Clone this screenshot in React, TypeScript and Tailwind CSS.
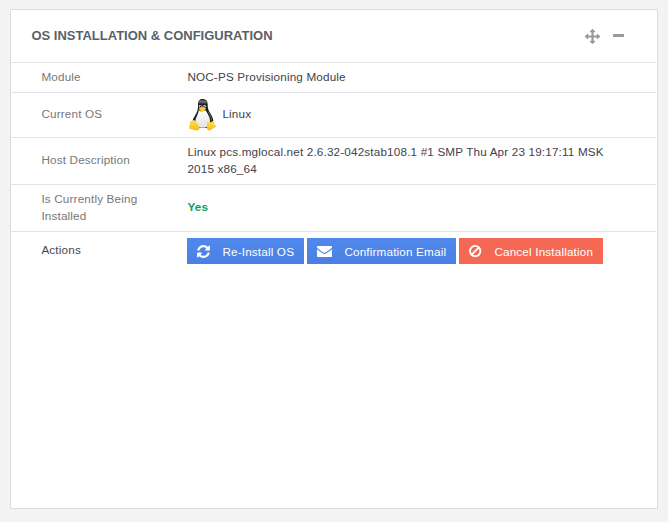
import React from 'react';

const RefreshIcon = () => (
  <svg className="h-[15px] w-[13px] shrink-0" viewBox="0 0 1536 1792" fill="currentColor">
    <path d="M1511 1056q0 5-1 7-64 268-268 434.5t-478 166.5q-146 0-282.5-55t-243.5-157l-129 129q-19 19-45 19t-45-19-19-45v-448q0-26 19-45t45-19h448q26 0 45 19t19 45-19 45l-137 137q71 66 161 102t187 36q134 0 250-65t186-179q11-17 53-117 8-23 30-23h192q13 0 22.5 9.5t9.5 22.5zm25-800v448q0 26-19 45t-45 19h-448q-26 0-45-19t-19-45 19-45l138-138q-148-137-349-137-134 0-250 65t-186 179q-11 17-53 117-8 23-30 23h-199q-13 0-22.5-9.5t-9.5-22.5v-7q65-268 270-434.5t480-166.5q146 0 284 55.5t245 156.5l130-129q19-19 45-19t45 19 19 45z" />
  </svg>
);

const EnvelopeIcon = () => (
  <svg className="h-[15px] w-[15px] shrink-0" viewBox="0 0 15 15">
    <rect x="0" y="2" width="15" height="11" rx="0.8" fill="currentColor" />
    <path d="M-.3 4.3C2.5 6.6 5.9 9.5 7.5 9.5S12.5 6.6 15.3 4.3" fill="none" stroke="#4d85e8" strokeWidth="1.2" />
  </svg>
);

const BanIcon = () => (
  <svg className="h-[15px] w-[13px] shrink-0" viewBox="0 0 13 15" fill="none" stroke="currentColor" strokeWidth="1.9">
    <circle cx="6.2" cy="7.1" r="5.2" />
    <path d="M2.7 10.6 9.7 3.6" />
  </svg>
);

const MoveIcon = () => (
  <svg className="h-[15px] w-[15px]" viewBox="0 0 1792 1792" fill="currentColor">
    <path d="M1792 896q0 26-19 45l-256 256q-19 19-45 19t-45-19-19-45v-128h-384v384h128q26 0 45 19t19 45-19 45l-256 256q-19 19-45 19t-45-19l-256-256q-19-19-19-45t19-45 45-19h128v-384h-384v128q0 26-19 45t-45 19-45-19l-256-256q-19-19-19-45t19-45l256-256q19-19 45-19t45 19 19 45v128h384v-384h-128q-26 0-45-19t-19-45 19-45l256-256q19-19 45-19t45 19l256 256q19 19 19 45t-19 45-45 19h-128v384h384v-128q0-26 19-45t45-19 45 19l256 256q19 19 19 45z" />
  </svg>
);

const MinusIcon = () => (
  <svg className="h-[15px] w-[11px]" viewBox="0 0 11 15" fill="currentColor">
    <rect y="5" width="11" height="3" rx="0.6" />
  </svg>
);

const Tux = () => (
  <svg className="h-8 w-8 shrink-0" viewBox="0 0 32 32">
    <defs>
      <linearGradient id="belly" x1="0" y1="0" x2="0" y2="1">
        <stop offset="0" stopColor="#fff" />
        <stop offset="1" stopColor="#e2e2e6" />
      </linearGradient>
      <linearGradient id="foot" x1="0" y1="0" x2="0" y2="1">
        <stop offset="0" stopColor="#ffe34a" />
        <stop offset="1" stopColor="#f8b81c" />
      </linearGradient>
      <linearGradient id="head" x1="0" y1="0" x2="0" y2="1">
        <stop offset="0" stopColor="#333" />
        <stop offset="0.35" stopColor="#777" />
        <stop offset="0.7" stopColor="#222" />
      </linearGradient>
    </defs>
    <path d="M11 6C11 1.9 12.7.1 15.7.1c3.4 0 4.9 2.2 4.9 5.6 0 3.9 1 5.8 2.9 8.9 2 3.3 3.2 6.4 2.8 9.4-.2 2-2 4.6-4.7 5H9.8c-2.7-.5-4.9-3.1-4.5-6 .3-2.5 1.7-4.4 2.8-6.4C9.4 13.8 11.1 12.5 11 6Z" fill="#1a1a1a" />
    <path d="M11.3 7c-.4-4.3 1-6.6 4.4-6.6 3.4 0 4.7 2.5 4.6 6.7Z" fill="url(#head)" />
    <path d="M11.8 11.2c2.5 1.7 4.6 1.4 6.8 0 1.6 3 4.2 6 4.4 10 .3 4-2.2 7.4-6.9 7.6-5 .2-8-2.8-7.8-6.4.1-4 3-7 3.5-11.2Z" fill="url(#belly)" />
    <path d="M21 12.5c2.2 3.2 3.6 6.2 3.3 9" fill="none" stroke="#777" strokeWidth="0.8" />
    <ellipse cx="13.3" cy="7.2" rx="1.4" ry="1.3" fill="#ddd" />
    <ellipse cx="17.3" cy="7.2" rx="1.6" ry="1.3" fill="#ddd" />
    <circle cx="13.6" cy="7.3" r="0.7" fill="#111" />
    <circle cx="16.9" cy="7.3" r="0.7" fill="#111" />
    <path d="M11.7 9.6c1.2-.8 2.2-1.6 3.5-1.6 1.4 0 2.7.6 3.8 1.4-.5 1.7-2.2 3-3.8 3s-3.1-1.3-3.5-2.8Z" fill="#fcc830" />
    <path d="M3.2 22c1.3.2 2.4-.1 3.3-.9 1.8 0 3.5 3 5.3 5.7 1.3 2.2.8 4.4-1.8 4.6-2.1.1-4.2-1.2-7.1-1.5-.8-.1-.7-1.6-.3-3.1Z" fill="url(#foot)" />
    <path d="M20.4 22c.9 1 1.9 1.4 3 1.2 1.1 0 1.7-.8 2.2-1.5 1.2.8.7 2.4 1.5 3.3.8.9 2.5 1.6 1.9 2.4-1.5 1.4-3.7 2.1-5.2 3.5-1.4 1-4 .5-3.9-1.5 0-2.6-.1-5.6.5-7.4Z" fill="url(#foot)" />
  </svg>
);

type RowProps = { label: string; height: string; lift?: string; strong?: boolean; last?: boolean; children: React.ReactNode };

const Row = ({ label, height, lift = 'pb-[3px]', strong, last, children }: RowProps) => (
  <div className={`mr-px flex items-center ${height} ${last ? '' : 'border-b border-[#e2e2ec]'}`}>
    <div className={`w-[176px] shrink-0 pr-9 pl-[30.4px] ${lift} ${strong ? 'text-[#484850]' : 'text-[#777]'}`}>{label}</div>
    <div className="w-[440px]">{children}</div>
  </div>
);

type ButtonProps = { color: string; width: string; icon: React.ReactNode; children: React.ReactNode };

const ActionButton = ({ color, width, icon, children }: ButtonProps) => (
  <button className={`flex h-[26px] items-center gap-[12.4px] pl-[10px] whitespace-nowrap text-white ${color} ${width}`}>
    {icon}
    <span className="pt-px">{children}</span>
  </button>
);

export default function App() {
  return (
    <div className="h-[522px] w-[668px] bg-[#f3f3f3] px-[10px] pt-[9px] font-['Liberation_Sans',Arial,sans-serif] text-[11.7px] leading-[17px] tracking-[0.17px] text-[#42424c]">
      <section className="h-[500px] w-[648px] border border-[#dcdcdc] bg-white">
        <header className="mr-px flex h-[53px] items-center border-b border-[#e2e2ec] pr-[32px] pl-[20.4px]">
          <h2 className="flex-1 pb-[2px] text-[13px] font-bold tracking-normal text-[#5b5f66]">OS INSTALLATION &amp; CONFIGURATION</h2>
          <div className="flex gap-[13px] text-[#999]">
            <MoveIcon />
            <MinusIcon />
          </div>
        </header>
        <Row label="Module" height="h-[30px]" lift="pb-[2px]">
          <div className="pb-[2px] pl-[0.4px]">NOC-PS Provisioning Module</div>
        </Row>
        <Row label="Current OS" height="h-[45px]">
          <div className="flex items-center gap-[3.4px]">
            <Tux />
            <span className="pb-[3px]">Linux</span>
          </div>
        </Row>
        <Row label="Host Description" height="h-[47px]">
          <div className="pb-[2px] pl-[0.4px]">
            Linux pcs.mglocal.net 2.6.32-042stab108.1 #1 SMP Thu Apr 23 19:17:11 MSK
            <br />
            2015 x86_64
          </div>
        </Row>
        <Row label="Is Currently Being Installed" height="h-[47px]" lift="pb-[2px]">
          <div className="pb-[3px] pl-[0.4px] font-bold text-[#0a9f60]">Yes</div>
        </Row>
        <Row label="Actions" height="h-[38px]" strong last>
          <div className="flex gap-[3px]">
            <ActionButton color="bg-linear-to-b from-[#508aeb] to-[#4a7fe5]" width="w-[117px]" icon={<RefreshIcon />}>Re-Install OS</ActionButton>
            <ActionButton color="bg-linear-to-b from-[#508aeb] to-[#4a7fe5]" width="w-[149px]" icon={<EnvelopeIcon />}>Confirmation Email</ActionButton>
            <ActionButton color="bg-[#f56954]" width="w-[144px]" icon={<BanIcon />}>Cancel Installation</ActionButton>
          </div>
        </Row>
      </section>
    </div>
  );
}
